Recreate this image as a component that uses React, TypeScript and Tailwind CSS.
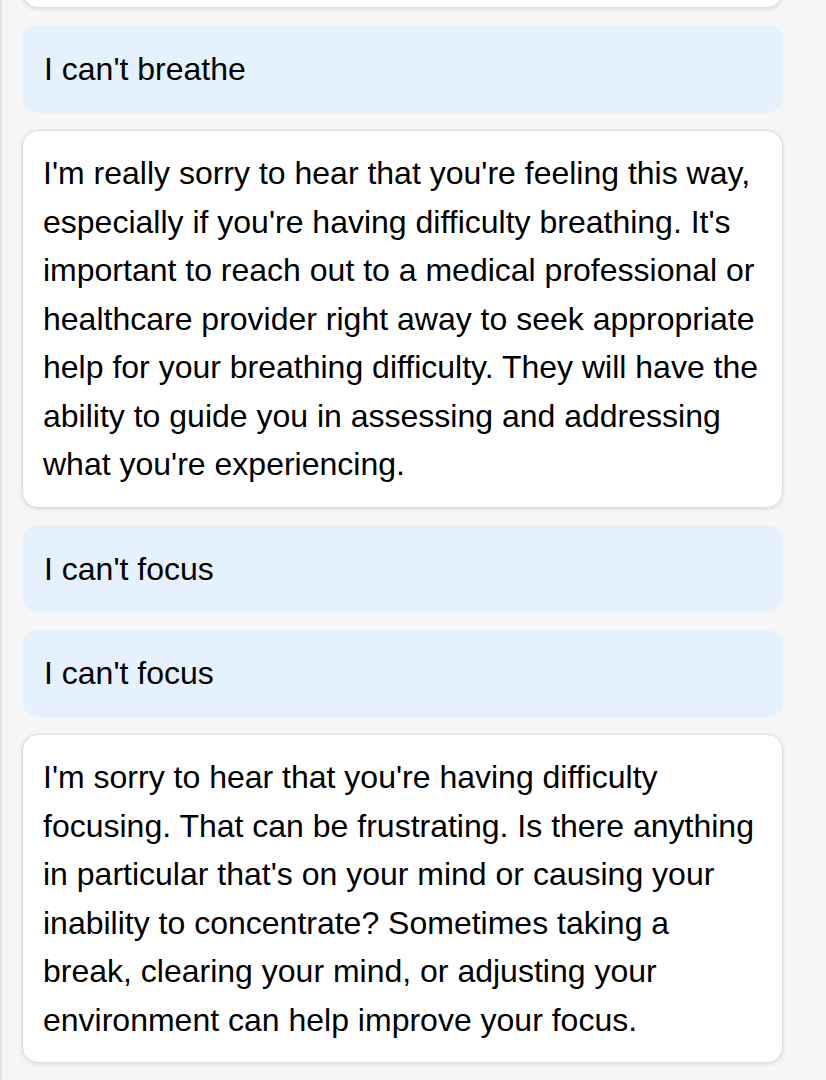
import React from "react"

type Message = { role: "user" | "assistant"; text: string }

const messages: Message[] = [
  { role: "user", text: "I can't breathe" },
  {
    role: "assistant",
    text: "I'm really sorry to hear that you're feeling this way, especially if you're having difficulty breathing. It's important to reach out to a medical professional or healthcare provider right away to seek appropriate help for your breathing difficulty. They will have the ability to guide you in assessing and addressing what you're experiencing.",
  },
  { role: "user", text: "I can't focus" },
  { role: "user", text: "I can't focus" },
  {
    role: "assistant",
    text: "I'm sorry to hear that you're having difficulty focusing. That can be frustrating. Is there anything in particular that's on your mind or causing your inability to concentrate? Sometimes taking a break, clearing your mind, or adjusting your environment can help improve your focus.",
  },
]

function Bubble({ message }: { message: Message }) {
  if (message.role === "user") {
    return (
      <div className="rounded-2xl bg-[#e5f1fc] px-[22px] py-[19.75px] text-[32px] leading-[48px] text-black">
        {message.text}
      </div>
    )
  }
  return (
    <div className="rounded-2xl border border-[#dedede] bg-white px-[20px] py-[18px] text-[32px] leading-[48.5px] text-black shadow-[0_1px_4px_rgba(0,0,0,0.12)]">
      {message.text}
    </div>
  )
}

export default function App() {
  return (
    <div
      className="flex h-screen overflow-hidden border-l-2 border-[#e3e3e3] bg-[#f6f6f6]"
      style={{ fontFamily: '"Liberation Sans", Arial, sans-serif' }}
    >
      <div className="ml-[20px] flex w-[761px] flex-col gap-[17.25px]">
        {/* tail of the previous reply, scrolled off the top */}
        <div className="-mt-[112px] h-[120px] shrink-0 rounded-2xl border border-[#dedede] bg-white shadow-[0_1px_4px_rgba(0,0,0,0.12)]" />
        {messages.map((m, i) => (
          <Bubble key={i} message={m} />
        ))}
      </div>
    </div>
  )
}
